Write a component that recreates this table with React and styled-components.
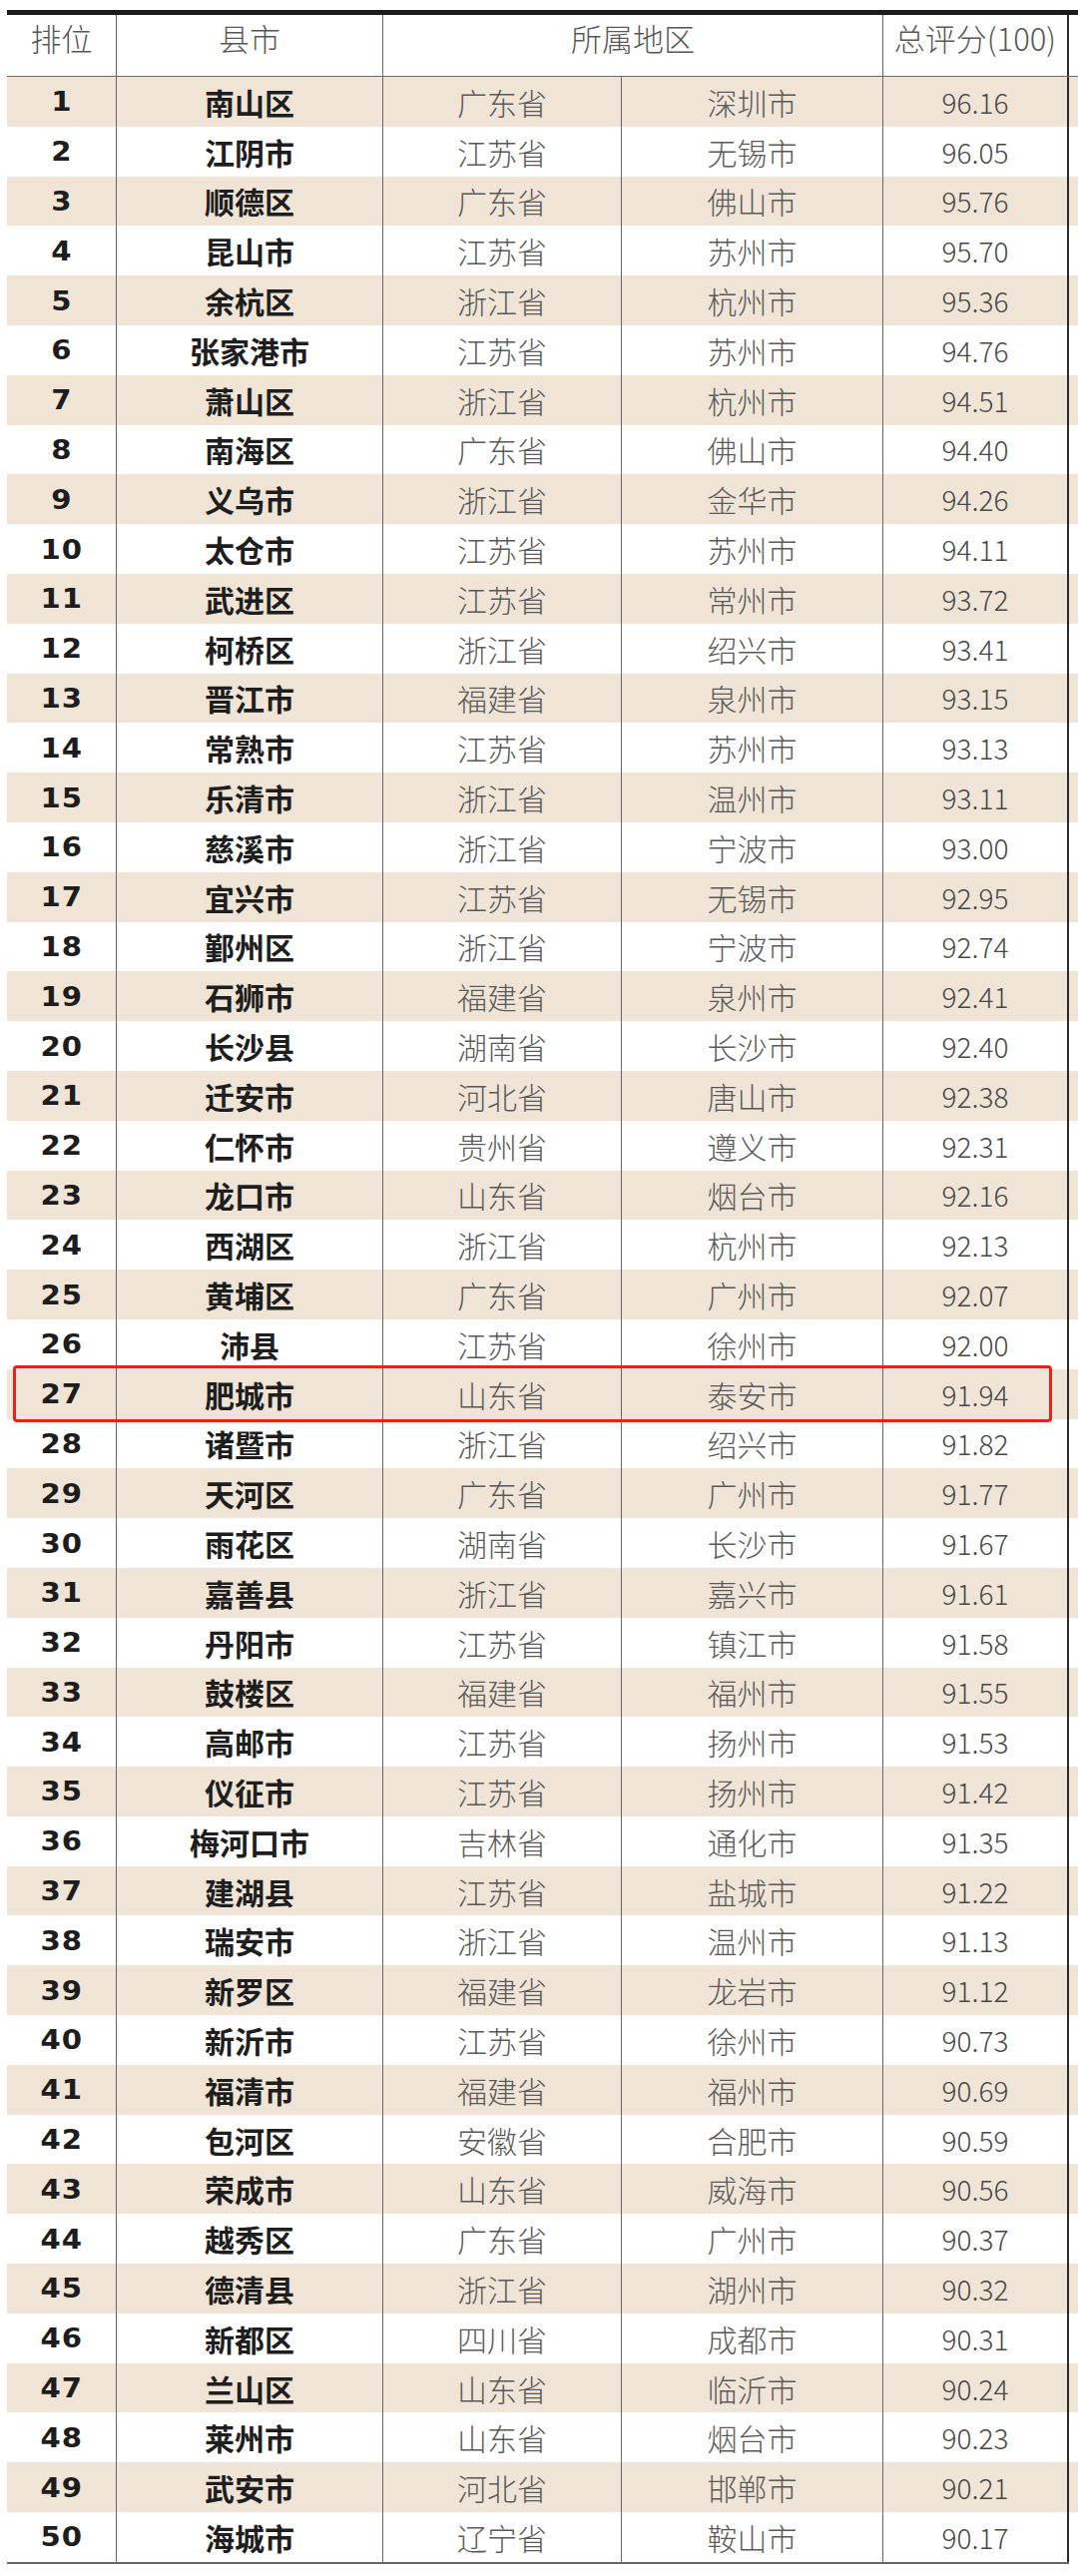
import React from "react";
import styled, { createGlobalStyle } from "styled-components";

const GlobalStyle = createGlobalStyle`
  html, body { margin: 0; padding: 0; background: #ffffff; }
  body { font-family: "Noto Sans CJK SC", "Noto Sans", sans-serif; }
`;

const data = [
  ["南山区", "广东省", "深圳市", "96.16"],
  ["江阴市", "江苏省", "无锡市", "96.05"],
  ["顺德区", "广东省", "佛山市", "95.76"],
  ["昆山市", "江苏省", "苏州市", "95.70"],
  ["余杭区", "浙江省", "杭州市", "95.36"],
  ["张家港市", "江苏省", "苏州市", "94.76"],
  ["萧山区", "浙江省", "杭州市", "94.51"],
  ["南海区", "广东省", "佛山市", "94.40"],
  ["义乌市", "浙江省", "金华市", "94.26"],
  ["太仓市", "江苏省", "苏州市", "94.11"],
  ["武进区", "江苏省", "常州市", "93.72"],
  ["柯桥区", "浙江省", "绍兴市", "93.41"],
  ["晋江市", "福建省", "泉州市", "93.15"],
  ["常熟市", "江苏省", "苏州市", "93.13"],
  ["乐清市", "浙江省", "温州市", "93.11"],
  ["慈溪市", "浙江省", "宁波市", "93.00"],
  ["宜兴市", "江苏省", "无锡市", "92.95"],
  ["鄞州区", "浙江省", "宁波市", "92.74"],
  ["石狮市", "福建省", "泉州市", "92.41"],
  ["长沙县", "湖南省", "长沙市", "92.40"],
  ["迁安市", "河北省", "唐山市", "92.38"],
  ["仁怀市", "贵州省", "遵义市", "92.31"],
  ["龙口市", "山东省", "烟台市", "92.16"],
  ["西湖区", "浙江省", "杭州市", "92.13"],
  ["黄埔区", "广东省", "广州市", "92.07"],
  ["沛县", "江苏省", "徐州市", "92.00"],
  ["肥城市", "山东省", "泰安市", "91.94"],
  ["诸暨市", "浙江省", "绍兴市", "91.82"],
  ["天河区", "广东省", "广州市", "91.77"],
  ["雨花区", "湖南省", "长沙市", "91.67"],
  ["嘉善县", "浙江省", "嘉兴市", "91.61"],
  ["丹阳市", "江苏省", "镇江市", "91.58"],
  ["鼓楼区", "福建省", "福州市", "91.55"],
  ["高邮市", "江苏省", "扬州市", "91.53"],
  ["仪征市", "江苏省", "扬州市", "91.42"],
  ["梅河口市", "吉林省", "通化市", "91.35"],
  ["建湖县", "江苏省", "盐城市", "91.22"],
  ["瑞安市", "浙江省", "温州市", "91.13"],
  ["新罗区", "福建省", "龙岩市", "91.12"],
  ["新沂市", "江苏省", "徐州市", "90.73"],
  ["福清市", "福建省", "福州市", "90.69"],
  ["包河区", "安徽省", "合肥市", "90.59"],
  ["荣成市", "山东省", "威海市", "90.56"],
  ["越秀区", "广东省", "广州市", "90.37"],
  ["德清县", "浙江省", "湖州市", "90.32"],
  ["新都区", "四川省", "成都市", "90.31"],
  ["兰山区", "山东省", "临沂市", "90.24"],
  ["莱州市", "山东省", "烟台市", "90.23"],
  ["武安市", "河北省", "邯郸市", "90.21"],
  ["海城市", "辽宁省", "鞍山市", "90.17"],
];

const HIGHLIGHT_RANK = 27;

const Page = styled.div`
  padding: 10px 0 0 7px;
  width: 1073px;
`;

const Table = styled.div`
  width: 1073px;
  display: flex;
  flex-direction: column;
`;

const HeaderRow = styled.div`
  display: grid;
  grid-template-columns: 110px 267px 501px 186px 9px;
  height: 61px;
  border-top: 5px solid #1c1c1c;
  border-bottom: 1.5px solid #6a6a6a;
  box-sizing: content-box;
`;

const HeaderCell = styled.div`
  display: flex;
  align-items: center;
  justify-content: center;
  padding-bottom: 16px;
  box-sizing: border-box;
  font-family: "Noto Sans CJK SC", "Noto Sans", sans-serif;
  font-weight: 300;
  font-size: 31px;
  color: #585858;
  border-right: ${(p) => (p.$line === "dark" ? "2px solid #2a2a2a" : p.$line ? "1.5px solid #666" : "none")};
`;

const Row = styled.div`
  position: relative;
  display: grid;
  grid-template-columns: 110px 267px 239px 262px 186px 9px;
  height: 49.8px;
  background: ${(p) => (p.$striped ? "#efe4d5" : "#ffffff")};
`;

const Cell = styled.div`
  display: flex;
  align-items: center;
  justify-content: center;
  box-sizing: border-box;
  border-right: ${(p) => (p.$line === "dark" ? "2px solid #2a2a2a" : p.$line ? "1.5px solid #666" : "none")};
  white-space: nowrap;
`;

const RankText = styled.span`
  display: inline-block;
  font-family: "DejaVu Sans", "Liberation Sans", sans-serif;
  font-weight: 700;
  font-size: 27px;
  color: #1d1d1d;
  letter-spacing: 1px;
  line-height: 1;
  transform: scaleX(1.08);
`;

const CountyText = styled.span`
  font-family: "Noto Sans CJK SC", "Noto Sans", sans-serif;
  font-weight: 700;
  font-size: 30px;
  color: #1e1e1e;
  line-height: 1;
`;

const RegionText = styled.span`
  font-family: "Noto Sans CJK SC", "Noto Sans", sans-serif;
  font-weight: 300;
  font-size: 30px;
  color: #5a5a5a;
  line-height: 1;
`;

const ScoreText = styled.span`
  font-family: "Noto Sans CJK SC", "Noto Sans", sans-serif;
  font-weight: 300;
  font-size: 28px;
  color: #484848;
  line-height: 1;
`;

const Highlight = styled.div`
  position: absolute;
  z-index: 2;
  top: -4px;
  bottom: -3px;
  left: 6px;
  width: 1041px;
  border: 3px solid #e6231c;
  border-radius: 4px;
  box-sizing: border-box;
  pointer-events: none;
`;

const BottomRule = styled.div`
  width: 1064px;
  height: 2px;
  background: #666666;
`;

export default function App() {
  return (
    <>
      <GlobalStyle />
      <Page>
        <Table>
          <HeaderRow>
            <HeaderCell $line>排位</HeaderCell>
            <HeaderCell $line>县市</HeaderCell>
            <HeaderCell $line>所属地区</HeaderCell>
            <HeaderCell $line="dark">总评分(100)</HeaderCell>
            <HeaderCell />
          </HeaderRow>
          {data.map(([county, province, city, score], i) => {
            const rank = i + 1;
            return (
              <Row key={rank} $striped={rank % 2 === 1}>
                <Cell $line>
                  <RankText>{rank}</RankText>
                </Cell>
                <Cell $line>
                  <CountyText>{county}</CountyText>
                </Cell>
                <Cell $line>
                  <RegionText>{province}</RegionText>
                </Cell>
                <Cell $line>
                  <RegionText>{city}</RegionText>
                </Cell>
                <Cell $line="dark">
                  <ScoreText>{score}</ScoreText>
                </Cell>
                <Cell />
                {rank === HIGHLIGHT_RANK && <Highlight />}
              </Row>
            );
          })}
          <BottomRule />
        </Table>
      </Page>
    </>
  );
}
